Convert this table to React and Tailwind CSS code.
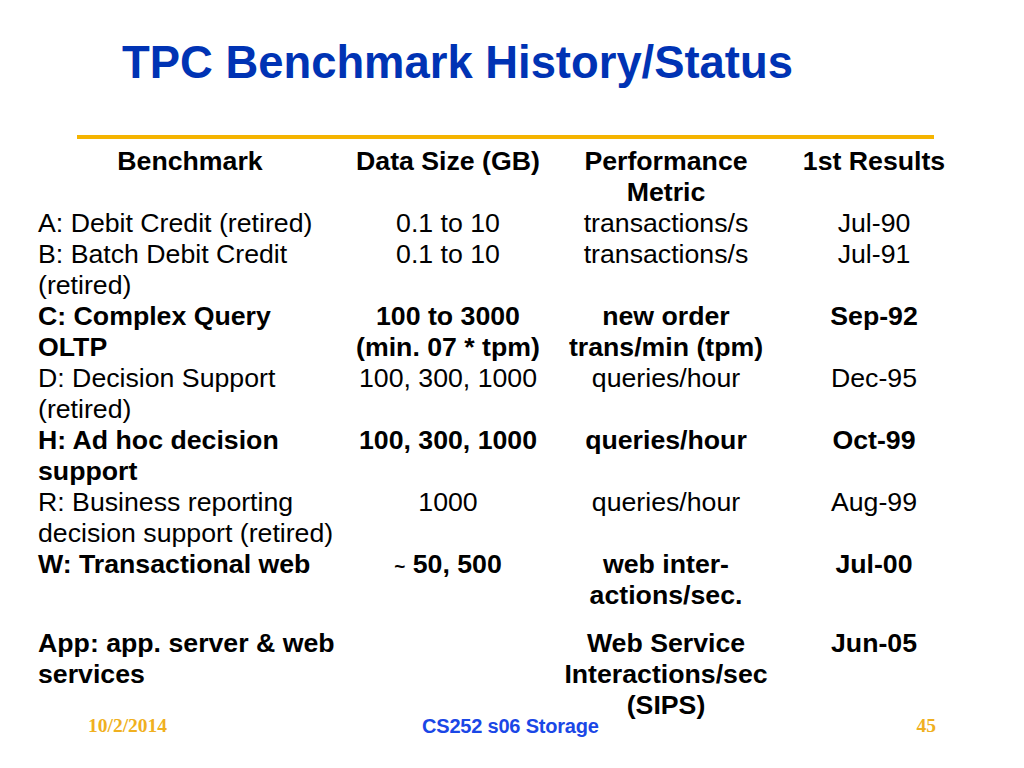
// Slide: TPC benchmark history table, rendered as a 4-column grid.

const rows = [
  { bold: false, cells: [<>A: Debit Credit (retired)</>, '0.1 to 10', 'transactions/s', 'Jul-90'] },
  { bold: false, cells: [<>B: Batch Debit Credit<br />(retired)</>, '0.1 to 10', 'transactions/s', 'Jul-91'] },
  { bold: true, cells: [<>C: Complex Query<br />OLTP</>, <>100 to 3000<br />(min. 07 * tpm)</>, <>new order<br />trans/min (tpm)</>, 'Sep-92'] },
  { bold: false, cells: [<>D: Decision Support<br />(retired)</>, '100, 300, 1000', 'queries/hour', 'Dec-95'] },
  { bold: true, cells: [<>H: Ad hoc decision<br />support</>, '100, 300, 1000', 'queries/hour', 'Oct-99'] },
  { bold: false, cells: [<>R: Business reporting<br />decision support (retired)</>, '1000', 'queries/hour', 'Aug-99'] },
  { bold: true, pad: true, cells: [<>W: Transactional web</>, <><span className="text-[19px]">~</span> 50, 500</>, <>web inter-<br />actions/sec.</>, 'Jul-00'] },
  { bold: true, cells: [<>App: app. server &amp; web<br />services</>, '', <>Web Service<br />Interactions/sec<br />(SIPS)</>, 'Jun-05'] },
]

function Row({ row, header }) {
  const weight = header || row.bold ? 'font-bold' : 'font-normal'
  const pad = row.pad ? 'pb-[17px]' : ''
  return (
    <>
      {row.cells.map((c, i) => (
        <div key={i} className={`${weight} ${pad} ${i === 0 && !header ? 'text-left' : 'text-center'}`}>
          {c}
        </div>
      ))}
    </>
  )
}

export default function App() {
  return (
    <div className="relative w-[1024px] h-[768px] bg-white overflow-hidden font-['Liberation_Sans',Arial,sans-serif]">
      {/* Title */}
      <h1 className="pt-[37px] pl-[122px] text-[45.4px] leading-[52px] font-bold text-[#0033b4]">
        TPC Benchmark History/Status
      </h1>

      {/* Gold rule */}
      <div className="mt-[46px] ml-[77px] w-[857px] h-[4px] bg-[#f5b400]" />

      {/* Table */}
      <div className="mt-[7px] ml-[38px] grid grid-cols-[304px_212px_224px_192px] text-[26.7px] leading-[31px] text-black">
        <Row header row={{ cells: ['Benchmark', 'Data Size (GB)', <>Performance<br />Metric</>, '1st Results'] }} />
        {rows.map((r, i) => <Row key={i} row={r} />)}
      </div>

      {/* Footer */}
      <div className="absolute left-0 right-0 top-[713px] h-[26px] flex items-center">
        <span className="ml-[88px] w-[334px] text-[19.5px] font-bold text-[#f0b020] font-['Liberation_Serif','Times_New_Roman',serif]">
          10/2/2014
        </span>
        <span className="text-[20px] font-bold text-[#1a47e6] tracking-[-0.2px]">CS252 s06 Storage</span>
        <span className="ml-auto mr-[88px] text-[19.5px] font-bold text-[#f0b020] font-['Liberation_Serif','Times_New_Roman',serif]">
          45
        </span>
      </div>
    </div>
  )
}
